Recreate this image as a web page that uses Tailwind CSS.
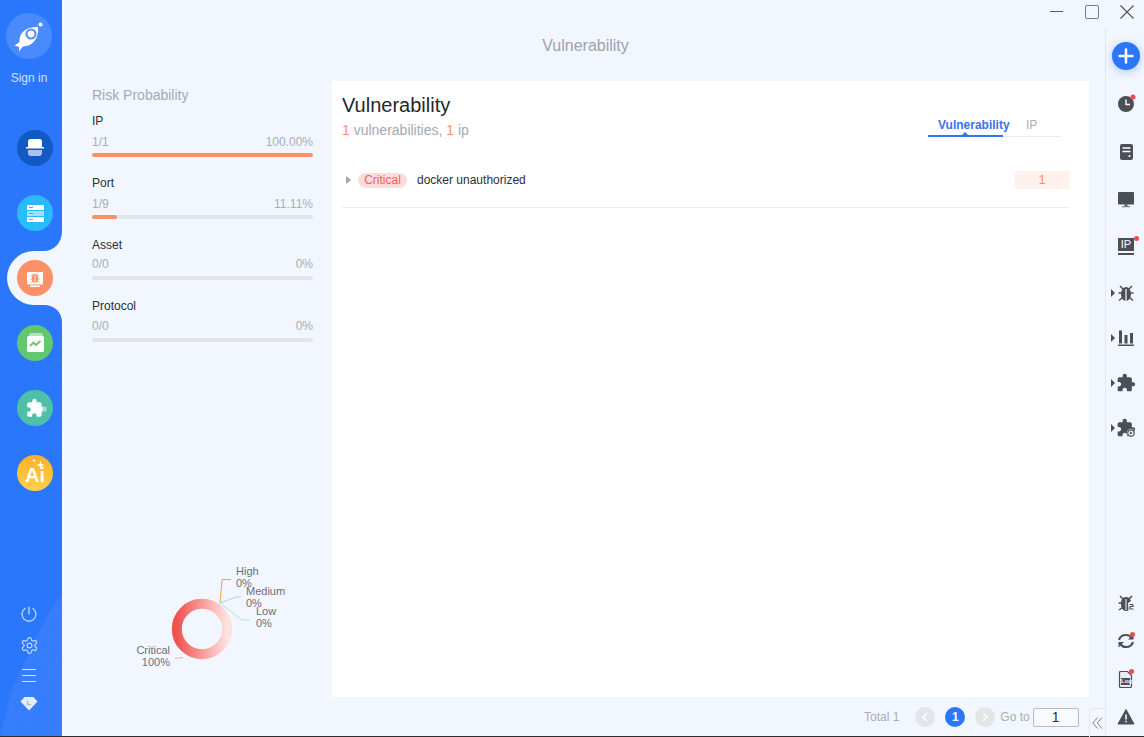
<!DOCTYPE html>
<html lang="en">
<head>
    <meta charset="UTF-8">
    <meta name="viewport" content="width=device-width, initial-scale=1.0">
    <title>Vulnerability</title>
    <script src="https://cdn.jsdelivr.net/npm/@tailwindcss/browser@4"></script>
</head>
<body class="bg-[#f2f6fe] font-['Liberation_Sans',Arial,sans-serif] overflow-hidden">
<div class="w-[1144px] h-[736px] flex bg-[#f2f6fe]">

    <!-- Left nav -->
    <aside class="relative w-[62px] h-full bg-[#2b77fb] flex flex-col shrink-0 overflow-hidden">
        <svg class="absolute left-0 top-0" width="62" height="736" viewBox="0 0 62 736" fill="none">
            <path d="M0 736C8 700 14 680 24 664C36 640 46 612 62 596V736Z" fill="#fff" fill-opacity=".05"/>
            <path d="M4 736C12 700 20 680 30 662C40 642 50 620 62 606M12 736C20 710 28 684 38 666C46 652 54 636 62 626M22 736C30 716 38 696 46 680C52 670 58 660 62 654" stroke="#fff" stroke-opacity=".04"/>
            <path d="M62 231C62 243 54 251 44 251H34A27 27 0 0 0 34 305H44C54 305 62 312 62 322Z" fill="#f2f6fe"/>
        </svg>

        <div class="relative ml-[6px] mt-[13px] w-[46px] h-[46px] rounded-full bg-white/15">
            <svg width="46" height="46" viewBox="0 0 46 46">
                <path d="M8.500 32.500L13.500 29C13 20 19 14 32 14C33 24 28 33 17 33.500L13 38.500L13 34Z" fill="#fff"/>
                <circle cx="25" cy="21" r="4.500" fill="#fff" stroke="#5a90ec" stroke-width="2.200"/>
                <circle cx="34.500" cy="11.500" r="2" fill="#fff"/>
            </svg>
        </div>
        <div class="relative w-[58px] mt-[12px] text-center text-[12px] leading-[14px] text-[#cfe0ff]">Sign in</div>

        <div class="relative ml-[17px] mt-[45px] flex flex-col gap-[29px]">
            <div class="w-[36px] h-[36px] rounded-full bg-[#1259c3]">
                <svg width="36" height="36" viewBox="0 0 36 36">
                    <path d="M11 17V11.500A2.500 2.500 0 0 1 13.500 9H22.500A2.500 2.500 0 0 1 25 11.500V17Z" fill="#fff"/>
                    <rect x="9" y="17" width="18" height="1.500" fill="#fff"/>
                    <path d="M11 20H25V23A3 3 0 0 1 22 26H14A3 3 0 0 1 11 23Z" fill="#a9c1f0"/>
                </svg>
            </div>
            <div class="w-[36px] h-[36px] rounded-full bg-gradient-to-b from-[#2fb6fb] to-[#25c0ff]">
                <svg width="36" height="36" viewBox="0 0 36 36">
                    <rect x="10" y="10" width="17" height="5" rx=".5" fill="#fff"/>
                    <rect x="10" y="16" width="17" height="5" rx=".5" fill="#fff" fill-opacity=".55"/>
                    <rect x="10" y="22" width="17" height="5" rx=".5" fill="#fff"/>
                    <path d="M12 12.500H16M12 18.500H16M12 24.500H16" stroke="#2fb6fb" stroke-width="1.200"/>
                </svg>
            </div>
            <div class="w-[36px] h-[36px] rounded-full bg-[#fd9066]">
                <svg width="36" height="36" viewBox="0 0 36 36">
                    <rect x="10" y="12" width="16" height="12.500" rx="1" fill="#fff"/>
                    <rect x="13" y="25.500" width="10" height="1.500" rx=".7" fill="#fff"/>
                    <path d="M13.800 16H22.200M13.500 19H22.500M14 22.500L16 20.500M22 22.500L20 20.500M15 13.500L16.500 15M21 13.500L19.500 15" stroke="#fd9066" stroke-width="1"/>
                    <ellipse cx="18" cy="18.500" rx="3" ry="4.500" fill="#fd9066"/>
                    <path d="M18 15V23" stroke="#fff" stroke-width=".8"/>
                </svg>
            </div>
            <div class="w-[36px] h-[36px] rounded-full bg-[#62c76f]">
                <svg width="36" height="36" viewBox="0 0 36 36">
                    <path d="M12 12V10.500A2.500 2.500 0 0 1 14.500 8H23.500A2.500 2.500 0 0 1 26 10.500V12Z" fill="#fff" fill-opacity=".5"/>
                    <rect x="10" y="11" width="17" height="16" rx="1.500" fill="#fff"/>
                    <path d="M13 21L16.500 17.500L19 20L23.500 16" fill="none" stroke="#62c76f" stroke-width="1.800"/>
                </svg>
            </div>
            <div class="w-[36px] h-[36px] rounded-full bg-[#4fc0a8]">
                <svg x="0" y="0" width="36" height="36" viewBox="0 0 36 36">
                    <circle cx="27" cy="19" r="2.800" fill="#fff" fill-opacity=".45"/>
                    <g transform="translate(8.500 8) scale(.85)">
                        <path d="M20.500 11H19V7c0-1.100-.9-2-2-2h-4V3.500C13 2.120 11.880 1 10.500 1S8 2.120 8 3.500V5H4c-1.100 0-1.990.9-1.990 2v3.800H3.500c1.490 0 2.700 1.210 2.700 2.700s-1.210 2.700-2.700 2.700H2V20c0 1.100.9 2 2 2h3.800v-1.500c0-1.490 1.210-2.700 2.700-2.700 1.490 0 2.700 1.210 2.700 2.700V22H17c1.100 0 2-.9 2-2v-4h.5c.8 0 .8-5 1-5z" fill="#fff"/>
                    </g>
                </svg>
            </div>
            <div class="relative w-[36px] h-[36px] rounded-full bg-gradient-to-b from-[#fdaf20] to-[#ffd04d]">
                <span class="absolute left-[8px] top-[9px] text-[20px] leading-[22px] font-bold text-white">Ai</span>
                <svg class="absolute left-0 top-0" width="36" height="36" viewBox="0 0 36 36">
                    <path d="M23.500 5.500L24.500 9L28 10L24.500 11L23.500 14.500L22.500 11L19 10L22.500 9Z" fill="#fff"/>
                    <path d="M17 3L17.600 5L19.500 5.500L17.600 6L17 8L16.400 6L14.500 5.500L16.400 5Z" fill="#fff" fill-opacity=".8"/>
                </svg>
            </div>
        </div>

        <div class="relative mt-auto mb-[25px] flex flex-col items-center w-[58px] text-[#b9d4ff]">
            <svg width="18" height="18" viewBox="0 0 18 18" fill="none" stroke="currentColor" stroke-width="1.400" stroke-linecap="round">
                <path d="M9 2V9M5 3.500A7 7 0 1 0 13 3.500"/>
            </svg>
            <svg class="mt-[13px]" width="19" height="19" viewBox="0 0 24 24" fill="none" stroke="currentColor" stroke-width="1.600">
                <path d="M12.220 2h-.44a2 2 0 0 0-2 2v.18a2 2 0 0 1-1 1.730l-.43.25a2 2 0 0 1-2 0l-.15-.08a2 2 0 0 0-2.730.73l-.22.38a2 2 0 0 0 .73 2.730l.15.1a2 2 0 0 1 1 1.720v.51a2 2 0 0 1-1 1.740l-.15.09a2 2 0 0 0-.73 2.730l.22.38a2 2 0 0 0 2.730.73l.15-.08a2 2 0 0 1 2 0l.43.25a2 2 0 0 1 1 1.730V20a2 2 0 0 0 2 2h.44a2 2 0 0 0 2-2v-.18a2 2 0 0 1 1-1.730l.43-.25a2 2 0 0 1 2 0l.15.08a2 2 0 0 0 2.730-.73l.22-.39a2 2 0 0 0-.73-2.730l-.15-.08a2 2 0 0 1-1-1.740v-.5a2 2 0 0 1 1-1.740l.15-.09a2 2 0 0 0 .73-2.730l-.22-.38a2 2 0 0 0-2.730-.73l-.15.08a2 2 0 0 1-2 0l-.43-.25a2 2 0 0 1-1-1.730V4a2 2 0 0 0-2-2z"/>
                <circle cx="12" cy="12" r="3"/>
            </svg>
            <div class="mt-[14px] w-[14px] flex flex-col gap-[5px]">
                <div class="h-[1px] bg-[#d3e3ff]"></div>
                <div class="h-[1px] bg-[#d3e3ff]"></div>
                <div class="h-[1px] bg-[#d3e3ff]"></div>
            </div>
            <svg class="mt-[14px]" width="18" height="15" viewBox="0 0 18 15">
                <path d="M4.500 1H13.500L17.500 5.500L9 14.500L.5 5.500Z" fill="#e6eefc"/>
                <path d="M7.500 4.500V8.500H11" fill="none" stroke="#a9bbd8" stroke-width="1.400"/>
            </svg>
        </div>
    </aside>

    <!-- Everything right of the nav -->
    <div class="flex-1 flex flex-col min-w-0">
        <!-- Window controls -->
        <div class="h-[28px] flex justify-end items-start pt-[5px] shrink-0 text-[#4b4f56]">
            <svg width="13" height="13" viewBox="0 0 13 13" class="mr-[22px]" stroke="#5a5f66" stroke-width="1"><path d="M0 6.500H13"/></svg>
            <svg width="14" height="14" viewBox="0 0 14 14" class="mr-[21px]" fill="none"><rect x=".5" y=".5" width="13" height="13" rx="1.500" stroke="#6d7f96"/></svg>
            <svg width="14" height="14" viewBox="0 0 14 14" class="mr-[10px]" stroke="#4b4f56" stroke-width="1.100"><path d="M.5 .5L13.500 13.500M13.500 .5L.5 13.500"/></svg>
        </div>

        <div class="flex-1 flex min-h-0">
            <!-- Center -->
            <div class="w-[1043px] flex flex-col shrink-0">
                <div class="h-[53px] pl-[4px] pt-[9px] text-center text-[16px] leading-[18px] text-[#9fa3ab] shrink-0">Vulnerability</div>

                <div class="flex h-[616px]">
                    <!-- Risk panel -->
                    <div class="relative w-[270px] pl-[30px] pr-[19px] shrink-0">
                        <div class="mt-[6px] text-[14px] leading-[16px] text-[#a3a9b5]">Risk Probability</div>

                        <div class="mt-[11px] h-[62px]">
                            <div class="text-[12px] leading-[14px] text-[#2b2f36]">IP</div>
                            <div class="mt-[7px] flex justify-between text-[12px] leading-[14px] text-[#a8aeb9]"><span>1/1</span><span>100.00%</span></div>
                            <div class="mt-[4px] h-[4px] rounded-full bg-[#e2e5ea]"><div class="h-full rounded-full bg-[#fb8f66]" style="width:100%"></div></div>
                        </div>
                        <div class="h-[62px]">
                            <div class="text-[12px] leading-[14px] text-[#2b2f36]">Port</div>
                            <div class="mt-[7px] flex justify-between text-[12px] leading-[14px] text-[#a8aeb9]"><span>1/9</span><span>11.11%</span></div>
                            <div class="mt-[4px] h-[4px] rounded-full bg-[#e2e5ea]"><div class="h-full rounded-full bg-[#fb8f66]" style="width:11.11%"></div></div>
                        </div>
                        <div class="h-[61px]">
                            <div class="text-[12px] leading-[14px] text-[#2b2f36]">Asset</div>
                            <div class="mt-[5px] flex justify-between text-[12px] leading-[14px] text-[#a8aeb9]"><span>0/0</span><span>0%</span></div>
                            <div class="mt-[5px] h-[4px] rounded-full bg-[#e2e5ea]"></div>
                        </div>
                        <div class="h-[62px]">
                            <div class="text-[12px] leading-[14px] text-[#2b2f36]">Protocol</div>
                            <div class="mt-[6px] flex justify-between text-[12px] leading-[14px] text-[#a8aeb9]"><span>0/0</span><span>0%</span></div>
                            <div class="mt-[5px] h-[4px] rounded-full bg-[#e2e5ea]"></div>
                        </div>

                        <!-- Donut chart -->
                        <svg class="absolute left-[58px] top-[479px]" width="180" height="115" viewBox="120 560 180 115" font-family="Liberation Sans, Arial, sans-serif" font-size="11" fill="#6a6f7a">
                            <defs>
                                <linearGradient id="ring" x1="0" x2="1" y1="0" y2="0">
                                    <stop offset="0" stop-color="#ef5350"/>
                                    <stop offset="1" stop-color="#ffe2e0"/>
                                </linearGradient>
                            </defs>
                            <circle cx="202" cy="629" r="25.200" fill="none" stroke="url(#ring)" stroke-width="10"/>
                            <path d="M220 603L222 579.500H231" fill="none" stroke="#f7a24f"/>
                            <path d="M220 603L236 597H241" fill="none" stroke="#b5cdf5"/>
                            <path d="M220 603L242 620H250" fill="none" stroke="#a8ecc8"/>
                            <path d="M183 657.500L175 658.500" fill="none" stroke="#f7a9a7"/>
                            <text x="236" y="575">High</text>
                            <text x="236" y="587">0%</text>
                            <text x="246" y="595">Medium</text>
                            <text x="246" y="607">0%</text>
                            <text x="256" y="615">Low</text>
                            <text x="256" y="627">0%</text>
                            <text x="170" y="654" text-anchor="end">Critical</text>
                            <text x="170" y="666" text-anchor="end">100%</text>
                        </svg>
                    </div>

                    <!-- Main card -->
                    <div class="w-[757px] h-[616px] bg-white px-[10px] shrink-0">
                        <div class="h-[50px] flex justify-between items-start">
                            <div>
                                <div class="mt-[13px] text-[20px] leading-[23px] text-[#24272c]">Vulnerability</div>
                                <div class="mt-[5px] text-[14px] leading-[16px] text-[#a3a9b5]"><span class="text-[#fb8f66]">1</span> vulnerabilities, <span class="text-[#fb8f66]">1</span> ip</div>
                            </div>
                            <div class="mt-[36px] mr-[18px] w-[133px] flex h-[20px] border-b border-[#e8eaee] text-[12px] leading-[16px]">
                                <div class="relative w-[75px] -mb-[1px] h-[20px] border-b-2 border-[#2b77fb] whitespace-nowrap font-bold text-[#3a72f0] pl-[10px]">Vulnerability
                                    <span class="absolute left-[34px] bottom-0 w-0 h-0 border-x-[3px] border-x-transparent border-b-[3px] border-b-[#2b77fb]"></span>
                                </div>
                                <div class="ml-[23px] text-[#a8aeb9]">IP</div>
                            </div>
                        </div>

                        <div class="mr-[10px] mt-[40px] h-[18px] pb-[18px] border-b border-[#eceef1] box-content flex items-center">
                            <span class="ml-[4px] w-0 h-0 border-y-[4px] border-y-transparent border-l-[5px] border-l-[#a8a4a0]"></span>
                            <span class="ml-[7px] w-[49px] h-[15px] rounded-full bg-[#fddcdc] text-center text-[12px] leading-[15px] text-[#f25c5c]">Critical</span>
                            <span class="ml-[10px] text-[12px] text-[#2b2f36]">docker unauthorized</span>
                            <span class="ml-auto w-[54px] h-[18px] rounded-[3px] bg-[#fef0ea] text-center text-[12px] leading-[18px] text-[#fb8f66]">1</span>
                        </div>
                    </div>
                </div>

                <!-- Pagination -->
                <div class="flex-1 flex items-start relative">
                    <div class="ml-[802px] mt-[10px] h-[20px] flex items-center text-[12px] text-[#a8aeb9]">
                        <span>Total 1</span>
                        <span class="ml-[16px] w-[20px] h-[20px] rounded-full bg-[#e3e5e8] flex items-center justify-center">
                            <svg width="8" height="10" viewBox="0 0 8 10" fill="none" stroke="#fff" stroke-width="1.500"><path d="M6 1L2 5L6 9"/></svg>
                        </span>
                        <span class="ml-[10px] w-[20px] h-[20px] rounded-full bg-[#2b77fb] text-white font-bold text-center leading-[20px]">1</span>
                        <span class="ml-[10px] w-[20px] h-[20px] rounded-full bg-[#e3e5e8] flex items-center justify-center">
                            <svg width="8" height="10" viewBox="0 0 8 10" fill="none" stroke="#fff" stroke-width="1.500"><path d="M2 1L6 5L2 9"/></svg>
                        </span>
                        <span class="ml-[5px]">Go to</span>
                        <span class="ml-[3px] w-[46px] h-[19px] border border-[#b8bcc2] rounded-[2px] bg-[#f8faff] text-center text-[14px] leading-[17px] text-[#2b2f36]">1</span>
                    </div>
                    <div class="absolute right-0 top-[11px] w-[16px] h-[29px] rounded-tl-[5px] border-l border-t border-[#e4e8f0] flex items-center justify-center">
                        <svg width="11" height="12" viewBox="0 0 11 12" fill="none" stroke="#7d838c" stroke-width="1"><path d="M5.500 .5L.8 6L5.500 11.500M10 .5L5.300 6L10 11.500"/></svg>
                    </div>
                </div>
            </div>

            <!-- Right rail -->
            <div class="flex-1 border-l border-[#e3e7ef] flex flex-col text-[#4b4f56]">
                <div class="pt-[4px]">
                    <div class="h-[48px] pl-[6px] flex items-center">
                        <div class="w-[28px] h-[28px] rounded-full bg-[#2b77fb] shadow-[0_2px_8px_rgba(43,119,251,0.35)] flex items-center justify-center">
                            <svg width="16" height="16" viewBox="0 0 16 16" stroke="#fff" stroke-width="2.500" stroke-linecap="round"><path d="M8 1.500V14.500M1.500 8H14.500"/></svg>
                        </div>
                    </div>
                    <div class="h-[48px] pl-[10px] flex items-center">
                        <svg width="20" height="20" viewBox="0 0 20 20"><circle cx="10" cy="10" r="8" fill="#4b4f56"/><path d="M10 5.500V10.500H14" fill="none" stroke="#fff" stroke-width="1.400"/><circle cx="17" cy="3" r="2.500" fill="#f24a4a"/></svg>
                    </div>
                    <div class="h-[48px] pl-[10px] flex items-center">
                        <svg width="20" height="20" viewBox="0 0 20 20"><rect x="4" y="2" width="13" height="16" rx="2" fill="#4b4f56"/><path d="M6.500 6H14.500M6.500 9.500H14.500" stroke="#fff" stroke-width="1.500"/><circle cx="13.500" cy="14" r="1.100" fill="#fff"/></svg>
                    </div>
                    <div class="h-[48px] pl-[10px] flex items-center">
                        <svg width="20" height="20" viewBox="0 0 20 20" fill="#4b4f56"><rect x="2" y="2" width="16" height="12.500" rx="1"/><rect x="8.500" y="14.500" width="3" height="2"/><rect x="6" y="16" width="8" height="1.300" fill="#8a8e94"/></svg>
                    </div>
                    <div class="h-[45px] pl-[10px] flex items-center">
                        <div class="relative w-[20px] h-[20px]">
                            <div class="absolute left-[2px] top-[1px] w-[16px] h-[13px] bg-[#4b4f56] text-white text-[11px] leading-[13px] text-center">IP</div>
                            <div class="absolute left-[2px] top-[16px] w-[16px] h-[2px] bg-[#4b4f56]"></div>
                            <div class="absolute left-[18px] -top-[1px] w-[5px] h-[5px] rounded-full bg-[#f24a4a]"></div>
                        </div>
                    </div>
                    <div class="h-[47px] pl-[5px] flex items-center">
                        <span class="w-0 h-0 mr-[1px] border-y-[4px] border-y-transparent border-l-[4px] border-l-[#4b4f56]"></span>
                        <svg width="20" height="20" viewBox="0 0 20 20"><path d="M4 3L7 6M16 3L13 6M2.500 10H17.500M3 17.500L6.500 14.500M17 17.500L13.500 14.500" stroke="#4b4f56" stroke-width="1.500" fill="none"/><ellipse cx="10" cy="11" rx="5" ry="7" fill="#4b4f56"/><path d="M10 6V18" stroke="#fff" stroke-width="1.200"/></svg>
                    </div>
                    <div class="h-[44px] pl-[5px] flex items-center">
                        <span class="w-0 h-0 mr-[1px] border-y-[4px] border-y-transparent border-l-[4px] border-l-[#4b4f56]"></span>
                        <svg width="20" height="20" viewBox="0 0 20 20" fill="#4b4f56"><rect x="3" y="2.500" width="3" height="13"/><rect x="8.500" y="7" width="3" height="8.500"/><rect x="14" y="5" width="3" height="10.500"/><rect x="2" y="16.500" width="16" height="1.500"/></svg>
                    </div>
                    <div class="h-[45px] pl-[5px] flex items-center">
                        <span class="w-0 h-0 mr-[1px] border-y-[4px] border-y-transparent border-l-[4px] border-l-[#4b4f56]"></span>
                        <svg width="20" height="20" viewBox="0 0 24 24" fill="#4b4f56"><path d="M20.500 11H19V7c0-1.100-.9-2-2-2h-4V3.500C13 2.120 11.880 1 10.500 1S8 2.120 8 3.500V5H4c-1.100 0-1.990.9-1.990 2v3.800H3.500c1.490 0 2.700 1.210 2.700 2.700s-1.210 2.700-2.700 2.700H2V20c0 1.100.9 2 2 2h3.800v-1.500c0-1.490 1.210-2.700 2.700-2.700 1.490 0 2.700 1.210 2.700 2.700V22H17c1.100 0 2-.9 2-2v-4h1.500c1.380 0 2.500-1.120 2.500-2.500S21.880 11 20.500 11z"/></svg>
                    </div>
                    <div class="h-[45px] pl-[5px] flex items-center">
                        <span class="w-0 h-0 mr-[1px] border-y-[4px] border-y-transparent border-l-[4px] border-l-[#4b4f56]"></span>
                        <svg width="20" height="20" viewBox="0 0 24 24" fill="#4b4f56"><path d="M20.500 11H19V7c0-1.100-.9-2-2-2h-4V3.500C13 2.120 11.880 1 10.500 1S8 2.120 8 3.500V5H4c-1.100 0-1.990.9-1.990 2v3.800H3.500c1.490 0 2.700 1.210 2.700 2.700s-1.210 2.700-2.700 2.700H2V20c0 1.100.9 2 2 2h3.800v-1.500c0-1.490 1.210-2.700 2.700-2.700 1.490 0 2.700 1.210 2.700 2.700V22H17c1.100 0 2-.9 2-2v-4h1.500c1.380 0 2.500-1.120 2.500-2.500S21.880 11 20.500 11z"/><circle cx="18" cy="18" r="5" fill="#f2f6fe"/><circle cx="18" cy="18" r="3.800" fill="none" stroke="#4b4f56" stroke-width="1.400"/><path d="M16.800 16.200L20 18L16.800 19.800Z"/></svg>
                    </div>
                </div>

                <div class="mt-auto">
                    <div class="h-[38px] pl-[10px] flex items-center">
                        <svg width="20" height="20" viewBox="0 0 20 20"><path d="M4 3L7 6M16 3L13 6M2.500 10H7M3 17L6.500 14.500" stroke="#4b4f56" stroke-width="1.500" fill="none"/><path d="M10 4C6.500 4 5 7 5 11C5 15 7 18 10 18C11 18 12 17.700 12.500 17.200L12 10L15 8C14 5.500 12.500 4 10 4Z" fill="#4b4f56"/><path d="M10 6V17" stroke="#fff" stroke-width="1"/><path d="M13.500 11.500H17M17 11.500V13.500H14M14 13.500V16M14 16H17.500" fill="none" stroke="#4b4f56" stroke-width="1.200"/></svg>
                    </div>
                    <div class="h-[38px] pl-[10px] flex items-center">
                        <svg width="20" height="20" viewBox="0 0 20 20"><path d="M3 9C4 5.500 7 4 10 4C12.500 4 14.500 5 15.500 7" fill="none" stroke="#4b4f56" stroke-width="2.200"/><path d="M17.500 4V9.500H12Z" fill="#4b4f56" transform="translate(0 -1)"/><path d="M17 11C16 14.500 13 16 10 16C7.500 16 5.500 15 4.500 13" fill="none" stroke="#4b4f56" stroke-width="2.200"/><path d="M2.500 16.500V11H8Z" fill="#4b4f56"/><circle cx="16.500" cy="3.500" r="2.500" fill="#f24a4a"/></svg>
                    </div>
                    <div class="h-[38px] pl-[10px] flex items-center">
                        <div class="relative w-[20px] h-[20px]">
                            <svg class="absolute left-0 top-0" width="20" height="20" viewBox="0 0 20 20"><path d="M3.500 3.500A1 1 0 0 1 4.500 2.500H11.500L15.500 6.500V17.500A1 1 0 0 1 14.500 18.500H4.500A1 1 0 0 1 3.500 17.500Z" fill="#e9eef6" stroke="#4b4f56" stroke-width="1.200"/><rect x="5" y="9" width="9" height="7" fill="#4b4f56"/></svg>
                            <span class="absolute left-[5px] top-[9px] w-[9px] text-center text-[6px] leading-[7px] font-bold text-white">Log</span>
                            <span class="absolute left-[13px] top-0 w-[5px] h-[5px] rounded-full bg-[#f24a4a]"></span>
                        </div>
                    </div>
                    <div class="h-[38px] pl-[10px] flex items-center">
                        <svg width="20" height="20" viewBox="0 0 20 20"><path d="M10 2.500L18 17H2Z" fill="#4b4f56" stroke="#4b4f56" stroke-linejoin="round"/><path d="M10 7.500V12.500M10 13.800V15.300" stroke="#fff" stroke-width="1.500"/></svg>
                    </div>
                </div>
            </div>
        </div>
    </div>
</div>
<div class="w-[1144px] h-[1px] bg-[#2d2d2d]"></div>
</body>
</html>
